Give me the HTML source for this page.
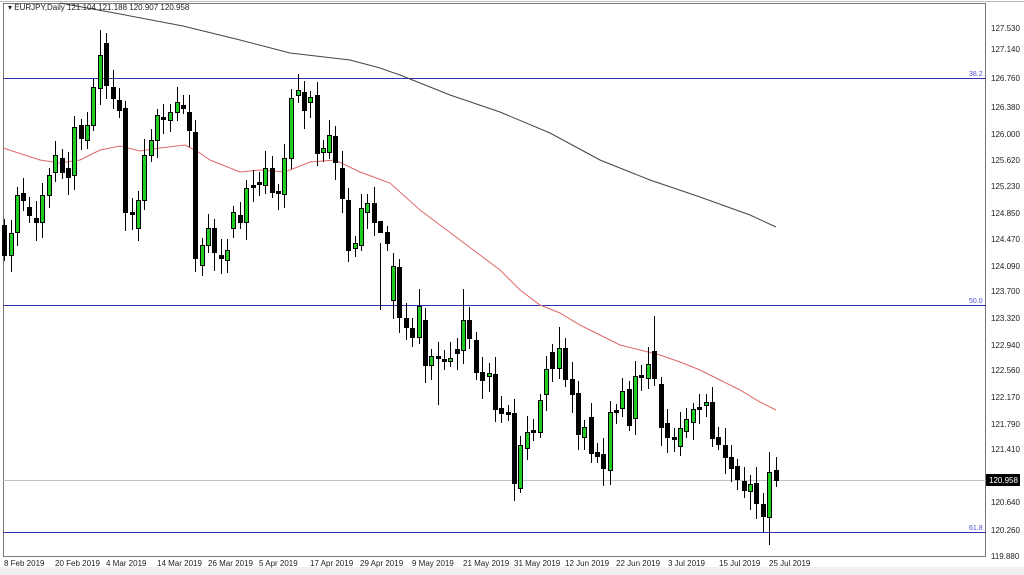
<!DOCTYPE html>
<html><head><meta charset="utf-8"><style>
html,body{margin:0;padding:0;background:#fff;}
body{width:1024px;height:575px;overflow:hidden;position:relative;font-family:"Liberation Sans",sans-serif;}
svg{position:absolute;left:0;top:0;}
</style></head><body>
<svg id="s" width="1024" height="575" xmlns="http://www.w3.org/2000/svg" font-family="Liberation Sans, sans-serif">
<rect x="0" y="0" width="1024" height="575" fill="#fff"/>
<rect x="0" y="567" width="1024" height="8" fill="#f0f0f0"/>
<line x1="0" y1="1.5" x2="1024" y2="1.5" stroke="#bbb"/>
<rect x="3.5" y="3.5" width="982" height="553" fill="none" stroke="#777"/>
<line x1="3" y1="78.5" x2="986" y2="78.5" stroke="#3030b0"/>
<line x1="3" y1="305.5" x2="986" y2="305.5" stroke="#3030b0"/>
<line x1="3" y1="532.5" x2="986" y2="532.5" stroke="#3030b0"/>
<line x1="3" y1="480.5" x2="986" y2="480.5" stroke="#c0c0c0"/>
<g font-size="7" fill="#5050d0"><text x="969" y="76">38.2</text><text x="969" y="303">50.0</text><text x="969" y="530">61.8</text></g>
<polyline fill="none" stroke="#444" stroke-width="1" points="60,3 120,14 183,26 240,40 290,53 350,60 380,68 400,75 450,95 500,112 550,133 600,160 650,180 700,197 750,215 776,227"/>
<polyline fill="none" stroke="#e06868" stroke-width="1" points="3,148 40,160 60,163 80,160 100,150 120,146 140,151 160,148 185,145 200,153 210,160 240,172 260,170 285,172 310,162 335,160 360,172 390,183 420,210 440,225 460,240 500,270 520,290 540,305 560,313 580,325 600,335 620,345 640,350 660,355 680,362 700,370 720,380 740,390 760,402 776,410"/>
<g id="c"></g>
<g font-size="8" fill="#222">
<text x="8" y="10">▾ EURJPY,Daily  121.104 121.188 120.907 120.958</text>
</g>
<g font-size="8" fill="#222" id="ax">
<text x="991" y="31">127.530</text><text x="991" y="52">127.140</text><text x="991" y="81">126.760</text>
<text x="991" y="110">126.380</text><text x="991" y="137">126.000</text><text x="991" y="163">125.620</text>
<text x="991" y="189">125.230</text><text x="991" y="216">124.850</text><text x="991" y="242">124.470</text>
<text x="991" y="269">124.090</text><text x="991" y="294">123.700</text><text x="991" y="321">123.320</text>
<text x="991" y="348">122.940</text><text x="991" y="373">122.560</text><text x="991" y="400">122.170</text>
<text x="991" y="427">121.790</text><text x="991" y="452">121.410</text><text x="991" y="505">120.640</text>
<text x="991" y="533">120.260</text><text x="991" y="559">119.880</text>
</g>
<rect x="986" y="474" width="34" height="12" fill="#000"/>
<text x="989" y="483" font-size="8" fill="#fff">120.958</text>
<g font-size="8" fill="#222">
<text x="4" y="566">8 Feb 2019</text><text x="55" y="566">20 Feb 2019</text><text x="106" y="566">4 Mar 2019</text>
<text x="157" y="566">14 Mar 2019</text><text x="208" y="566">26 Mar 2019</text><text x="259" y="566">5 Apr 2019</text>
<text x="310" y="566">17 Apr 2019</text><text x="360" y="566">29 Apr 2019</text><text x="412" y="566">9 May 2019</text>
<text x="463" y="566">21 May 2019</text><text x="514" y="566">31 May 2019</text><text x="565" y="566">12 Jun 2019</text>
<text x="616" y="566">22 Jun 2019</text><text x="668" y="566">3 Jul 2019</text><text x="719" y="566">15 Jul 2019</text>
<text x="769" y="566">25 Jul 2019</text>
</g>
</svg>
<script>
var d=[[4,'b',225,255],[11,'g',233,255],[17,'g',195,232],[23,'b',193,200],[29,'b',207,215],[36,'b',218,222],[42,'g',195,222],[49,'g',175,195],[55,'g',155,172],[62,'b',158,172],[68,'b',168,177],[74,'g',127,175],[81,'b',125,138],[87,'g',125,140],[93,'g',87,125],[100,'g',55,88],[106,'b',43,85],[113,'b',87,98],[119,'b',100,110],[125,'b',108,212],[132,'b',212,214],[138,'g',200,228],[144,'g',155,200],[151,'g',140,155],[157,'g',115,140],[163,'b',117,119],[170,'g',112,120],[177,'g',102,112],[183,'b',105,108],[189,'b',112,130],[195,'b',132,258],[202,'g',245,265],[208,'g',228,245],[214,'b',228,252],[221,'b',255,258],[227,'g',250,260],[233,'g',212,228],[240,'b',215,222],[246,'g',188,222],[253,'b',185,187],[259,'b',182,184],[265,'g',168,185],[272,'b',168,192],[278,'b',191,193],[284,'g',158,194],[291,'g',98,158],[298,'g',90,95],[304,'b',92,110],[310,'g',97,102],[317,'b',95,153],[323,'g',148,152],[329,'g',135,152],[335,'b',136,162],[342,'b',168,198],[348,'b',200,250],[355,'g',243,248],[361,'g',208,245],[367,'g',203,212],[374,'b',203,222],[380,'b',221,232],[387,'b',232,243],[393,'g',266,300],[399,'b',267,317],[406,'b',318,327],[412,'b',328,337],[419,'g',306,337],[425,'b',320,365],[431,'g',356,365],[438,'b',356,358],[444,'b',359,361],[450,'g',358,361],[457,'b',349,353],[463,'g',320,350],[469,'b',320,338],[476,'b',340,372],[482,'b',372,380],[489,'g',373,376],[495,'b',374,409],[501,'b',408,413],[508,'b',412,414],[514,'b',413,483],[520,'g',445,488],[527,'g',432,448],[533,'b',430,432],[540,'g',400,432],[546,'g',369,394],[552,'b',352,368],[559,'g',348,368],[565,'b',348,379],[572,'b',379,394],[578,'b',393,434],[584,'g',427,437],[591,'b',417,453],[597,'b',452,456],[603,'b',454,468],[610,'g',412,470],[616,'b',410,412],[622,'g',391,408],[629,'b',389,425],[635,'g',376,418],[641,'b',375,377],[648,'g',364,378],[654,'b',351,378],[661,'b',384,427],[667,'b',423,437],[674,'b',437,439],[680,'g',428,446],[686,'g',419,431],[693,'g',409,422],[699,'b',407,409],[706,'g',402,405],[712,'b',402,438],[718,'b',437,444],[725,'b',445,457],[731,'b',457,468],[737,'b',466,479],[744,'b',481,490],[750,'g',484,491],[756,'b',483,503],[763,'b',504,516],[769,'g',472,517],[776,'b',470,480]];
var hiX={655:316,463:289,100:30,769:452,559:327,382:310};var loX={769:545,763:532,520:493,440:405};
var s='';for(var i=0;i<d.length;i++){var c=d[i],x=c[0],t=c[2],b=c[3];var h=t-(6+(i*7)%12),l=b+(6+(i*11)%14);
for(var k in hiX){if(Math.abs(k-x)<3)h=hiX[k];}for(var k in loX){if(Math.abs(k-x)<3)l=loX[k];}
s+='<line x1="'+(x+.5)+'" y1="'+h+'" x2="'+(x+.5)+'" y2="'+l+'" stroke="#000"/>';
var hh=Math.max(b-t,1);s+='<rect x="'+(x-1.5)+'" y="'+t+'.5" width="4" height="'+hh+'" fill="'+(c[1]=='g'?'#22cc22':'#000')+'" stroke="#000" stroke-width="1"/>';}
document.getElementById('c').innerHTML=s;
</script>
</body></html>
